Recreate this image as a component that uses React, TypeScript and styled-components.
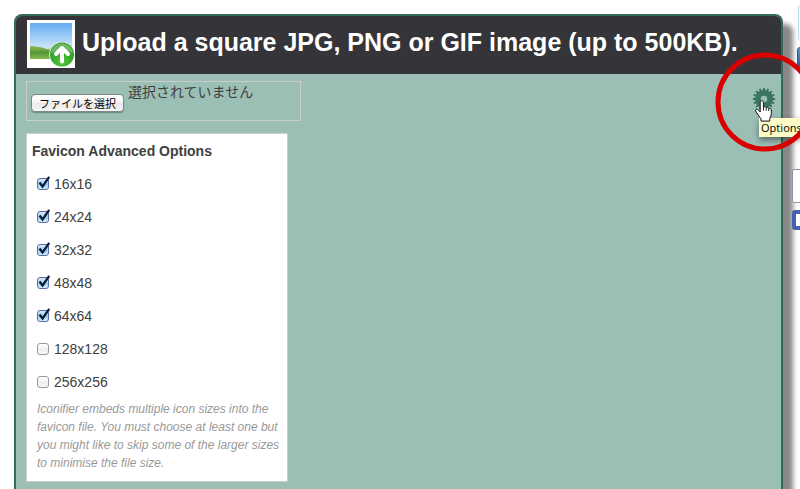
import React, { useRef, useState } from 'react';
import styled, { createGlobalStyle } from 'styled-components';

const GlobalStyle = createGlobalStyle`
  *, *::before, *::after { box-sizing: border-box; }
  body {
    margin: 0;
    background: #fff;
    color: #404040;
    font: 14px/18px "Liberation Sans", Arial, "Noto Sans CJK JP", sans-serif;
  }
`;

const Page = styled.div`
  display: flex;
  align-items: stretch;
  gap: 9px;
  min-height: 100vh;
  padding-left: 14px;
  overflow: hidden;
`;

const Panel = styled.main`
  flex: 1;
  min-width: 0;
  margin-top: 14px;
  border: 2px solid #336b58;
  border-bottom: 0;
  border-radius: 8px 8px 0 0;
  background: #9bbfb5;
  box-shadow: 10px 10px 5px #888;
`;

const Header = styled.header`
  display: flex;
  align-items: center;
  gap: 7px;
  height: 58px;
  padding: 0 10px 0 11px;
  border-radius: 6px 6px 0 0;
  background: #343439;
`;

const UploadPicture = styled.svg`
  flex: none;
  width: 48px;
  height: 48px;
  margin-bottom: 2px;
`;

const Title = styled.h1`
  margin: 0;
  padding-bottom: 6px;
  color: #fff;
  font-size: 25px;
  line-height: 32px;
  white-space: nowrap;
`;

const Content = styled.div`
  display: flex;
  align-items: flex-start;
  justify-content: space-between;
  padding: 7px 5px 7px 10px;
`;

const Form = styled.form`
  display: flex;
  flex-direction: column;
  align-items: flex-start;
  gap: 12px;
`;

const FileBox = styled.div`
  display: flex;
  align-items: flex-start;
  gap: 4px;
  width: 275px;
  height: 40px;
  padding: 0 4px;
  border: 1px solid #ccc;
`;

const FileInput = styled.input`
  display: none;
`;

const FileButton = styled.button`
  height: 18px;
  margin: 12px 0 0;
  padding: 0 7px;
  border: 1px solid #7d8a86;
  border-radius: 4px;
  background: linear-gradient(#fff, #f4f4f4 50%, #e9e9e9 51%, #f6f6f6);
  box-shadow: 0 1px 1px #6d8880;
  color: #000;
  font: 11px/16px "Noto Sans CJK JP", sans-serif;
  white-space: nowrap;
`;

const FileStatus = styled.span`
  font: 14px/18px "Noto Sans CJK JP", sans-serif;
`;

const Options = styled.fieldset`
  width: 262px;
  margin: 0;
  padding: 8px 5px 9px;
  border: 1px solid #ccc;
  background: #fff;
`;

const OptionsTitle = styled.h2`
  margin: 0 0 7px;
  font-size: 14px;
  line-height: 18px;
`;

const OptionRow = styled.label`
  display: flex;
  align-items: center;
  gap: 5px;
  height: 33px;
  padding-left: 5px;
`;

const CheckWrap = styled.span`
  position: relative;
  display: flex;
`;

const Checkbox = styled.input`
  appearance: none;
  width: 12px;
  height: 12px;
  margin: 0;
  border: 1px solid #999;
  border-radius: 3px;
  background: linear-gradient(#fff, #eee 60%, #fafafa);

  &:checked {
    border-color: #5a6aa5;
    background: linear-gradient(#d9eafa, #9fccf2 55%, #d2f3ff);
  }
`;

const Tick = styled.svg`
  position: absolute;
  left: 0;
  top: -2px;
  width: 14px;
  height: 14px;
  pointer-events: none;
`;

const Note = styled.p`
  margin: 2px 0 0;
  padding-left: 5px;
  color: #999;
  font-size: 12px;
  font-style: italic;
  line-height: 18px;
`;

const SettingsArea = styled.div`
  position: relative;
  display: flex;
  margin-top: 6px;
`;

const GearButton = styled.button`
  display: flex;
  padding: 0;
  border: 0;
  background: none;
  cursor: pointer;
`;

const Tooltip = styled.span`
  position: absolute;
  left: 7px;
  top: 31px;
  padding: 0 2px;
  background: #fdfcc7;
  box-shadow: 0 3px 6px rgba(0, 0, 0, 0.45);
  color: #111;
  font: 11px/19px "Noto Sans", sans-serif;
`;

const Pointer = styled.svg`
  position: absolute;
  left: 3px;
  top: 13px;
  width: 17px;
  height: 22px;
  pointer-events: none;
`;

const Highlight = styled.svg`
  position: absolute;
  left: -37px;
  top: -35px;
  width: 100px;
  height: 100px;
  pointer-events: none;
`;

const Sidebar = styled.aside`
  display: flex;
  flex: 0 0 8px;
  flex-direction: column;
  width: 8px;
  overflow: hidden;
`;

const SidebarFrame = styled.div`
  flex: none;
  width: 60px;
  height: 36px;
  margin: 5px 0 6px 6px;
  border: 1px solid #b5dcf0;
  border-radius: 3px;
  background: #f5fbff;
`;

const SidebarButton = styled.button`
  flex: none;
  width: 60px;
  height: 20px;
  margin: 0 0 0 5px;
  border: 1px solid #23559b;
  border-radius: 3px;
  background: linear-gradient(#5e9ad5, #285fac);
`;

const SidebarField = styled.input`
  flex: none;
  width: 60px;
  height: 34px;
  margin: 102px 0 7px;
  border: 1px solid #8c93a8;
  border-radius: 2px;
  background: #fff;
`;

const SidebarBadge = styled.button`
  flex: none;
  width: 60px;
  height: 20px;
  padding: 0;
  border: 4px solid #4561b3;
  border-radius: 3px;
  background: #fff;
`;

const GEAR_TEETH = Array.from({ length: 16 }, (_, i) => (i * 360) / 16);

function Gear() {
  return (
    <svg width="24" height="24" viewBox="0 0 24 24" aria-hidden="true">
      <g fill="#3b7562">
        {GEAR_TEETH.map((angle) => (
          <path key={angle} d="M10.8 4 11.1.9h1.8l.3 3.1Z" transform={`rotate(${angle} 12 12)`} />
        ))}
      </g>
      <circle cx="12" cy="12" r="6.2" fill="none" stroke="#3b7562" strokeWidth="5.8" />
    </svg>
  );
}

function HandPointer() {
  return (
    <Pointer viewBox="0 0 17 22" aria-hidden="true">
      <path
        d="M5.2 12V2.4C5.2.2 8.4.2 8.4 2.4V7c.8-.7 2.3-.4 2.7.6.9-.6 2.2-.2 2.5.8 1.3-.5 2.7.2 2.7 1.6v3.6c0 2-.8 3-1.5 4.6v2.9H6v-2.2c-1.4-2-3-3.8-4.3-6L.7 11C0 9.7 1.5 8.6 2.6 9.4c.9.6 1.7 1.4 2.6 2.6Z"
        fill="#fff"
        stroke="#111"
        strokeWidth="1"
        strokeLinejoin="round"
      />
      <path d="M8.5 7v3.5M11.2 7.8v2.9M13.7 8.6v2.4" stroke="#111" strokeWidth=".9" />
    </Pointer>
  );
}

function UploadIcon() {
  return (
    <UploadPicture viewBox="0 0 48 48" aria-hidden="true">
      <defs>
        <linearGradient id="sky" x1="0" y1="0" x2="0" y2="1">
          <stop offset="0" stopColor="#65adf5" />
          <stop offset=".75" stopColor="#d5eafa" />
          <stop offset="1" stopColor="#e8f4fb" />
        </linearGradient>
        <linearGradient id="hill" x1="0" y1="0" x2="0" y2="1">
          <stop offset="0" stopColor="#93bc56" />
          <stop offset=".5" stopColor="#579634" />
          <stop offset="1" stopColor="#86ba50" />
        </linearGradient>
        <radialGradient id="disc" cx=".5" cy=".8" r=".8">
          <stop offset="0" stopColor="#55c83d" />
          <stop offset=".5" stopColor="#38a82c" />
          <stop offset="1" stopColor="#318d2b" />
        </radialGradient>
      </defs>
      <path fill="#fff" d="M0 0h48v48H0z" />
      <path fill="url(#sky)" d="M3 3h42v36H3z" />
      <path fill="#bdd794" d="M20 29q12-5 25-4v14H12Z" />
      <path fill="url(#hill)" d="M3 26q13 0 26 7v6H3Z" />
      <circle cx="35" cy="34.5" r="12.8" fill="#e6f0e2" />
      <circle cx="35" cy="34.5" r="12" fill="url(#disc)" />
      <path fill="#6cb963" d="M23.8 33a11.3 11.3 0 0 1 22.4 0q-11-5-22.4 0Z" />
      <path d="M35 41.5V28.5M29 34l6-6 6 6" fill="none" stroke="#fff" strokeWidth="4" strokeLinecap="round" strokeLinejoin="round" />
    </UploadPicture>
  );
}

const SIZES = [
  { label: '16x16', on: true },
  { label: '24x24', on: true },
  { label: '32x32', on: true },
  { label: '48x48', on: true },
  { label: '64x64', on: true },
  { label: '128x128', on: false },
  { label: '256x256', on: false },
];

function SizeOption({ label, on }: { label: string; on: boolean }) {
  const [checked, setChecked] = useState(on);
  return (
    <OptionRow>
      <CheckWrap>
        <Checkbox type="checkbox" name="size" value={label} checked={checked} onChange={(e) => setChecked(e.target.checked)} />
        {checked && (
          <Tick viewBox="0 0 14 14" aria-hidden="true">
            <path d="M2.5 6.5 5.6 10.5 12.2.9" fill="none" stroke="#0c1d38" strokeWidth="2.3" />
          </Tick>
        )}
      </CheckWrap>
      {label}
    </OptionRow>
  );
}

export default function App() {
  const fileRef = useRef<HTMLInputElement>(null);
  const [fileName, setFileName] = useState('');

  return (
    <>
      <GlobalStyle />
      <Page>
        <Panel>
          <Header>
            <UploadIcon />
            <Title>Upload a square JPG, PNG or GIF image (up to 500KB).</Title>
          </Header>
          <Content>
            <Form>
              <FileBox>
                <FileInput
                  ref={fileRef}
                  type="file"
                  aria-label="ファイルを選択"
                  accept="image/jpeg,image/png,image/gif"
                  onChange={(e) => setFileName(e.target.files?.[0]?.name ?? '')}
                />
                <FileButton type="button" onClick={() => fileRef.current?.click()}>
                  ファイルを選択
                </FileButton>
                <FileStatus>{fileName || '選択されていません'}</FileStatus>
              </FileBox>
              <Options aria-labelledby="options-title">
                <OptionsTitle id="options-title">Favicon Advanced Options</OptionsTitle>
                {SIZES.map((size) => (
                  <SizeOption key={size.label} {...size} />
                ))}
                <Note>
                  Iconifier embeds multiple icon sizes into the favicon file. You must choose at least one but you might
                  like to skip some of the larger sizes to minimise the file size.
                </Note>
              </Options>
            </Form>
            <SettingsArea>
              <GearButton type="button" aria-labelledby="gear-tip">
                <Gear />
              </GearButton>
              <Tooltip id="gear-tip" role="tooltip">Options</Tooltip>
              <HandPointer />
              <Highlight viewBox="0 0 100 100" aria-hidden="true">
                <circle cx="50" cy="50" r="47" fill="none" stroke="#d90000" strokeWidth="5" />
              </Highlight>
            </SettingsArea>
          </Content>
        </Panel>
        <Sidebar>
          <SidebarFrame />
          <SidebarButton type="button" aria-label="Share" />
          <SidebarField type="text" aria-label="Comment" />
          <SidebarBadge type="button" aria-label="Like" />
        </Sidebar>
      </Page>
    </>
  );
}
